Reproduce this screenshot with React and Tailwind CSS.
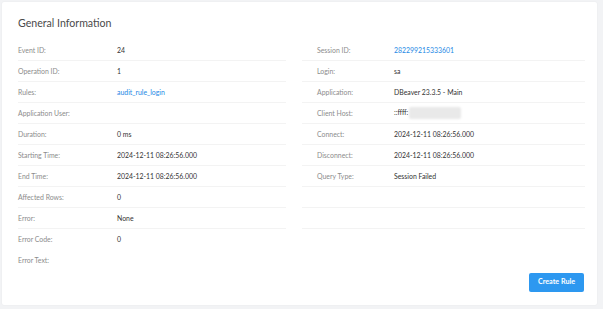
const leftRows = [
  { label: 'Event ID:', value: '24' },
  { label: 'Operation ID:', value: '1' },
  { label: 'Rules:', value: 'audit_rule_login', link: true },
  { label: 'Application User:', value: '' },
  { label: 'Duration:', value: '0 ms' },
  { label: 'Starting Time:', value: '2024-12-11 08:26:56.000' },
  { label: 'End Time:', value: '2024-12-11 08:26:56.000' },
  { label: 'Affected Rows:', value: '0' },
  { label: 'Error:', value: 'None' },
  { label: 'Error Code:', value: '0', last: true },
  { label: 'Error Text:', value: '', last: true },
];

const rightRows = [
  { label: 'Session ID:', value: '282299215333601', link: true },
  { label: 'Login:', value: 'sa' },
  { label: 'Application:', value: 'DBeaver 23.3.5 - Main' },
  { label: 'Client Host:', value: '::ffff:', masked: true },
  { label: 'Connect:', value: '2024-12-11 08:26:56.000' },
  { label: 'Disconnect:', value: '2024-12-11 08:26:56.000' },
  { label: 'Query Type:', value: 'Session Failed' },
  { label: '', value: '' },
  { label: '', value: '' },
];

function Row({ row, labelWidth, indent }) {
  return (
    <div className={`flex items-center h-[21px] ${row.last ? '' : 'border-b border-[#f3f3f3]'} ${indent}`}>
      <div className={`${labelWidth} shrink-0 text-[#8c8c8c]`}>{row.label}</div>
      <div className={row.link ? 'text-[#1e88e5]' : 'text-[#333]'}>
        {row.value}
        {row.masked && (
          <span className="inline-block align-middle ml-[1px] w-[52px] h-[12px] rounded-[2px] bg-[#e9e9e9] blur-[0.8px]" />
        )}
      </div>
    </div>
  );
}

export default function App() {
  return (
    <div className="w-[603px] h-[309px] bg-[#f2f3f5] p-[2px] font-['Lato',sans-serif]">
      <div className="w-[595px] h-[303px] bg-white rounded-[2px] shadow-[0_0_2px_rgba(0,0,0,0.06)] pl-[16px] pr-[14px] pt-[13px] flex flex-col">
        <div className="text-[10.6px] text-[#4a4a4a] leading-[16px] h-[25px]">General Information</div>
        <div className="grid grid-cols-[268px_283px] gap-x-[16px] text-[6.9px] leading-none">
          <div>
            {leftRows.map((r, i) => (
              <Row key={i} row={r} labelWidth="w-[99px]" indent="" />
            ))}
          </div>
          <div>
            {rightRows.map((r, i) => (
              <Row key={i} row={r} labelWidth="w-[77px]" indent="pl-[15px]" />
            ))}
          </div>
        </div>
        <div className="flex justify-end mt-[2px] mr-[-1px]">
          <button className="w-[55px] h-[19px] rounded-[2px] bg-[#2d98f0] text-white text-[7.2px] font-bold">
            Create Rule
          </button>
        </div>
      </div>
    </div>
  );
}
